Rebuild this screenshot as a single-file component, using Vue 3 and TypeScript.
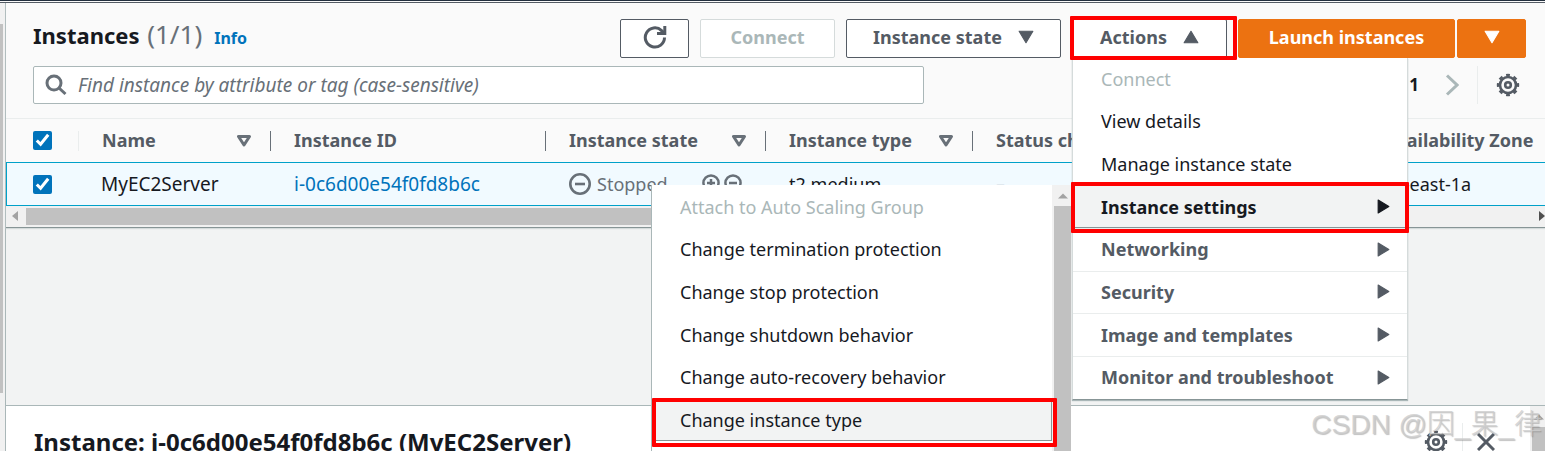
<script setup lang="ts">
import { ref } from 'vue'

interface Column {
  key: string
  label: string
  sortable: boolean
}

interface MenuItem {
  label: string
  disabled?: boolean
  submenu?: boolean
  active?: boolean
}

const columns: Column[] = [
  { key: 'name', label: 'Name', sortable: true },
  { key: 'id', label: 'Instance ID', sortable: false },
  { key: 'state', label: 'Instance state', sortable: true },
  { key: 'type', label: 'Instance type', sortable: true },
  { key: 'status', label: 'Status check', sortable: false },
  { key: 'zone', label: 'Availability Zone', sortable: false },
]

const actions: MenuItem[] = [
  { label: 'Connect', disabled: true },
  { label: 'View details' },
  { label: 'Manage instance state' },
  { label: 'Instance settings', submenu: true, active: true },
  { label: 'Networking', submenu: true },
  { label: 'Security', submenu: true },
  { label: 'Image and templates', submenu: true },
  { label: 'Monitor and troubleshoot', submenu: true },
]

const settings: MenuItem[] = [
  { label: 'Attach to Auto Scaling Group', disabled: true },
  { label: 'Change termination protection' },
  { label: 'Change stop protection' },
  { label: 'Change shutdown behavior' },
  { label: 'Change auto-recovery behavior' },
  { label: 'Change instance type', active: true },
]

const allSelected = ref(true)
const rowSelected = ref(true)
const query = ref('')
</script>

<template>
  <div class="console">
    <div class="topline"></div>
    <div class="body">
      <div class="rail"><div class="rail-thumb"></div></div>
      <main class="content">
        <section class="list">
          <header class="toolbar">
            <h1 class="title">Instances <span class="count">(1/1)</span></h1>
            <a class="info" href="#">Info</a>
            <div class="buttons">
              <button class="btn narrow" type="button" aria-label="Refresh">
                <svg class="icon" viewBox="0 0 24 24">
                  <path d="M21.500 12.500A9.600 9.600 0 1 1 18.600 5.600L21 8" />
                  <path d="M21.800 1v7.500H14" />
                </svg>
              </button>
              <button class="btn connect" type="button" disabled>Connect</button>
              <button class="btn state" type="button">
                Instance state
                <svg class="caret" viewBox="0 0 14 12"><path d="M1 1h12L7 11z" /></svg>
              </button>
              <div class="actions marked">
                <button class="btn action" type="button" aria-expanded="true">
                  Actions
                  <svg class="caret" viewBox="0 0 14 12"><path d="M1 11h12L7 1z" /></svg>
                </button>
                <ul class="menu">
                  <li
                    v-for="item in actions"
                    :key="item.label"
                    class="row"
                    :class="{ group: item.submenu, marked: item.active }"
                  >
                    <button
                      class="item"
                      :class="{ active: item.active }"
                      type="button"
                      :disabled="item.disabled"
                    >
                      {{ item.label }}
                      <svg v-if="item.submenu" class="arrow" viewBox="0 0 12 14">
                        <path d="M1 1v12L11 7z" />
                      </svg>
                    </button>
                    <div v-if="item.active" class="submenu">
                      <ul class="sublist">
                        <li
                          v-for="entry in settings"
                          :key="entry.label"
                          class="row"
                          :class="{ marked: entry.active }"
                        >
                          <button
                            class="item"
                            :class="{ active: entry.active }"
                            type="button"
                            :disabled="entry.disabled"
                          >
                            {{ entry.label }}
                          </button>
                        </li>
                      </ul>
                      <div class="vscroll">
                        <svg class="tri" viewBox="0 0 10 6"><path d="M0 5.500h10L5 .5z" /></svg>
                        <div class="vthumb"></div>
                      </div>
                    </div>
                  </li>
                </ul>
              </div>
              <div class="split">
                <button class="btn primary launch" type="button">Launch instances</button>
                <button class="btn primary narrow" type="button" aria-label="More launch options">
                  <svg class="caret" viewBox="0 0 14 12"><path d="M1 1h12L7 11z" /></svg>
                </button>
              </div>
            </div>
          </header>

          <div class="filters">
            <label class="search">
              <svg class="glass" viewBox="0 0 22 22">
                <circle cx="9" cy="9" r="7" />
                <path d="M14 14l6.500 6" />
              </svg>
              <input
                v-model="query"
                type="text"
                aria-label="Find instance"
                placeholder="Find instance by attribute or tag (case-sensitive)"
              />
            </label>
            <div class="pager">
              <span class="page">1</span>
              <button class="ghost" type="button" aria-label="Next page">
                <svg class="chevron" viewBox="0 0 14 22"><path d="M2 1.500L12 11 2 20.500" /></svg>
              </button>
              <span class="rule"></span>
              <button class="ghost" type="button" aria-label="Preferences">
                <svg class="gear" viewBox="0 0 24 24">
                  <circle cx="12" cy="12" r="8" />
                  <circle class="teeth" cx="12" cy="12" r="10" pathLength="16" />
                  <circle cx="12" cy="12" r="2.800" />
                </svg>
              </button>
            </div>
          </div>

          <div class="scroller">
            <table class="table">
              <colgroup>
                <col class="c-check" />
                <col v-for="c in columns" :key="c.key" :class="'c-' + c.key" />
              </colgroup>
              <thead>
                <tr>
                  <th class="check">
                    <input v-model="allSelected" type="checkbox" aria-label="Select all instances" />
                  </th>
                  <th v-for="c in columns" :key="c.key">
                    <div class="head">
                      <span class="label">{{ c.label }}</span>
                      <svg v-if="c.sortable" class="sort" viewBox="0 0 14 12">
                        <path d="M1.500 1.500h11L7 10z" />
                      </svg>
                    </div>
                  </th>
                </tr>
              </thead>
              <tbody>
                <tr class="selected">
                  <td class="check">
                    <input v-model="rowSelected" type="checkbox" aria-label="Select MyEC2Server" />
                  </td>
                  <td class="large">MyEC2Server</td>
                  <td class="large"><a href="#">i-0c6d00e54f0fd8b6c</a></td>
                  <td>
                    <div class="status">
                      <svg class="stop" viewBox="0 0 22 22">
                        <circle cx="11" cy="11" r="9.700" />
                        <path d="M6 11h10" />
                      </svg>
                      Stopped
                      <span class="zooms">
                        <svg class="lens" viewBox="0 0 20 20">
                          <circle cx="9" cy="9" r="7.600" />
                          <path d="M5 9h8M9 5v8M14.500 14.500L19 19" />
                        </svg>
                        <svg class="lens" viewBox="0 0 20 20">
                          <circle cx="9" cy="9" r="7.600" />
                          <path d="M5 9h8M14.500 14.500L19 19" />
                        </svg>
                      </span>
                    </div>
                  </td>
                  <td>t2.medium</td>
                  <td class="muted">–</td>
                  <td>us-east-1a</td>
                </tr>
              </tbody>
            </table>
          </div>
          <div class="hscroll">
            <svg class="side" viewBox="0 0 6 10"><path d="M6 0v10L0 5z" /></svg>
            <div class="hthumb"></div>
            <svg class="side dark" viewBox="0 0 6 10"><path d="M0 0v10l6-5z" /></svg>
          </div>
        </section>

        <section class="details">
          <h2 class="subtitle">Instance: i-0c6d00e54f0fd8b6c (MyEC2Server)</h2>
          <div class="tools">
            <button class="ghost" type="button" aria-label="Panel preferences">
              <svg class="gear" viewBox="0 0 24 24">
                <circle cx="12" cy="12" r="8" />
                <circle class="teeth" cx="12" cy="12" r="10" pathLength="16" />
                <circle cx="12" cy="12" r="2.800" />
              </svg>
            </button>
            <span class="rule"></span>
            <button class="ghost" type="button" aria-label="Close panel">
              <svg class="cross" viewBox="0 0 18 18"><path d="M1 1l16 16M17 1L1 17" /></svg>
            </button>
          </div>
          <div class="vscroll">
            <svg class="tri" viewBox="0 0 10 6"><path d="M0 5.500h10L5 .5z" /></svg>
            <div class="vthumb"></div>
          </div>
        </section>
      </main>
    </div>
    <div class="watermark">CSDN @因_果_律</div>
  </div>
</template>

<style>
body {
  margin: 0;
}
</style>

<style scoped>
* {
  box-sizing: border-box;
}

.console {
  position: relative;
  display: flex;
  flex-direction: column;
  height: 100vh;
  overflow: hidden;
  background: #f2f3f3;
  color: #16191f;
  font-family: 'Noto Sans', 'Open Sans', 'Noto Sans CJK SC', sans-serif;
  font-size: 18px;
  line-height: 24px;
}

.topline {
  flex: none;
  height: 3px;
  border-top: 1px solid #232f3e;
  border-bottom: 1px solid #545b64;
  background: #fafafa;
}

.body {
  display: flex;
  flex: 1;
  min-height: 0;
}

.rail {
  flex: none;
  width: 5px;
  padding-top: 21px;
  background: #f1f1f1;
}

.rail-thumb {
  width: 3px;
  height: 369px;
  background: #c1c1c1;
}

.content {
  display: flex;
  flex: 1;
  flex-direction: column;
  gap: 177px;
  min-width: 0;
  border-left: 1px solid #aab7b8;
}

.list {
  flex: none;
  border-bottom: 1px solid #879596;
  background: #fafafa;
  box-shadow: 0 1px 1px #d5dbdb;
}

.toolbar {
  display: flex;
  align-items: center;
  padding: 15px 19px 0 27px;
}

.title {
  margin: 0 0 7px;
  font-size: 22px;
  font-weight: 700;
  line-height: 32px;
}

.count {
  margin-left: 2px;
  color: #687078;
  font-size: 26px;
  font-weight: 400;
}

.info {
  margin: 0 0 0 12px;
  color: #0073bb;
  font-size: 16px;
  font-weight: 700;
  text-decoration: none;
}

.buttons {
  display: flex;
  gap: 11px;
  margin-left: auto;
}

.btn {
  display: flex;
  align-items: center;
  justify-content: center;
  gap: 16px;
  height: 39px;
  padding: 0 0 2px;
  border: 1px solid #545b64;
  border-radius: 2px;
  background: #fff;
  color: #545b64;
  font: inherit;
  font-weight: 700;
  white-space: nowrap;
}

.btn:disabled {
  border-color: #d5dbdb;
  color: #aab7b8;
}

.narrow {
  width: 69px;
}

.connect {
  width: 135px;
}

.state {
  width: 215px;
}

.launch {
  width: 217px;
}

.action {
  width: 155px;
}

.primary {
  border-color: #ec7211;
  background: #ec7211;
  color: #fff;
}

.split {
  display: flex;
  gap: 2px;
}

svg {
  display: block;
  flex: none;
  fill: none;
  stroke: currentColor;
}

.icon {
  width: 24px;
  height: 24px;
  stroke-width: 3;
}

.caret,
.arrow {
  fill: currentColor;
  stroke-width: 1;
  stroke-linejoin: round;
}

.caret {
  width: 16px;
  height: 14px;
}

.arrow {
  width: 13px;
  height: 15px;
}

.actions {
  position: relative;
  z-index: 5;
}

.marked {
  position: relative;
}

.marked::after {
  position: absolute;
  z-index: 6;
  border: 4px solid #f00;
  border-radius: 1px;
  content: '';
  pointer-events: none;
}

.actions.marked::after {
  inset: -3px -10px -2px -2px;
}

.menu .row.marked::after {
  inset: -3px -2px -5px -2px;
}

.sublist .row.marked::after {
  inset: -1px -5px -6px 0;
}

.menu,
.sublist {
  display: flex;
  flex-direction: column;
  margin: 0;
  padding: 0;
  list-style: none;
}

.menu {
  position: absolute;
  top: 100%;
  left: 0;
  width: 336px;
  height: 342px;
  border: 1px solid #d5dbdb;
  border-top: 0;
  border-bottom-color: #879596;
  background: #fff;
  box-shadow: 0 1px 1px #aab7b8;
}

.row {
  display: flex;
  flex: 1;
}

.item {
  display: flex;
  flex: 1;
  align-items: center;
  justify-content: space-between;
  padding: 0 17px 0 28px;
  border: 0;
  background: #fff;
  color: #16191f;
  font: inherit;
  text-align: left;
  white-space: nowrap;
}

.item:disabled {
  color: #aab7b8;
}

.group > .item {
  color: #545b64;
  font-weight: 700;
}

.group + .group > .item {
  box-shadow: inset 0 1px #eaeded;
}

.row > .item.active {
  background: #f2f3f3;
  box-shadow: inset 0 -1px #879596;
  color: #16191f;
}

.submenu {
  position: absolute;
  top: 0;
  right: 100%;
  display: flex;
  width: 420px;
  height: 300px;
  margin-right: 2px;
  border-left: 1px solid #aab7b8;
  background: #fff;
}

.sublist {
  flex: 1;
  height: 256px;
}

.sublist .row > .item.active {
  box-shadow: inset -1px -1px #879596;
}

.vscroll {
  display: flex;
  flex: none;
  flex-direction: column;
  align-items: center;
  gap: 7px;
  width: 19px;
  padding: 8px 0 0 2px;
  background: #f1f1f1;
}

.tri {
  width: 10px;
  height: 6px;
  fill: #a3a3a3;
  stroke: none;
}

.vthumb {
  flex: 1;
  width: 100%;
  background: #c1c1c1;
}

.filters {
  display: flex;
  align-items: center;
  justify-content: space-between;
  padding: 8px 25px 14px 27px;
}

.search {
  display: flex;
  flex: 0 1 891px;
  align-items: center;
  gap: 11px;
  height: 38px;
  padding: 0 11px;
  border: 1px solid #aab7b8;
  border-radius: 2px;
  background: #fff;
}

.glass {
  width: 22px;
  height: 22px;
  color: #687078;
  stroke-width: 3;
}

.search input {
  flex: 1;
  min-width: 0;
  padding: 0;
  border: 0;
  outline: 0;
  background: transparent;
  color: #16191f;
  font: inherit;
  font-size: 19px;
}

.search input::placeholder {
  color: #687078;
  font-style: italic;
  opacity: 1;
}

.pager,
.tools {
  display: flex;
  align-items: center;
  gap: 18px;
}

.page {
  margin-right: 8px;
  font-size: 17px;
  font-weight: 700;
}

.ghost {
  padding: 0;
  border: 0;
  background: none;
  color: #545b64;
}

.chevron {
  width: 14px;
  height: 22px;
  color: #aab7b8;
  stroke-width: 3;
}

.rule {
  width: 1px;
  height: 38px;
  background: #eaeded;
}

.gear {
  width: 24px;
  height: 24px;
  stroke-width: 2.6;
}

.teeth {
  stroke-width: 2.4;
  stroke-dasharray: 1 1;
  stroke-dashoffset: 0.5;
}

.cross {
  width: 18px;
  height: 18px;
  stroke-width: 3;
}

.scroller {
  overflow: hidden;
}

.table {
  width: 100%;
  min-width: 1539px;
  border-collapse: separate;
  border-spacing: 0;
  table-layout: fixed;
}

.c-check {
  width: 73px;
}

.c-name {
  width: 192px;
}

.c-id {
  width: 275px;
}

.c-state {
  width: 220px;
}

.c-type {
  width: 207px;
}

.c-status {
  width: 388px;
}

th,
td {
  height: 44px;
  padding: 0 0 0 23px;
  text-align: left;
  white-space: nowrap;
}

th {
  border-top: 1px solid #eaeded;
  color: #545b64;
  font-weight: 700;
}

td {
  border-top: 1px solid #00a1c9;
  border-bottom: 1px solid #00a1c9;
  background: #f1faff;
}

td:first-child {
  border-left: 1px solid #00a1c9;
}

td a {
  color: #0073bb;
  text-decoration: none;
}

.large {
  padding-left: 22px;
  font-size: 19px;
}

.large + .large {
  padding-left: 23px;
}

.check {
  padding-left: 27px;
}

td.check {
  padding-left: 26px;
}

.check input {
  display: block;
  width: 19px;
  height: 19px;
  margin: 0;
  accent-color: #0073bb;
}

th.check {
  background: linear-gradient(#eaeded, #eaeded) right center / 1px 20px no-repeat;
}

.head {
  display: flex;
  align-items: center;
  justify-content: space-between;
  height: 20px;
  padding-right: 19px;
  border-right: 1px solid #687078;
}

.label {
  padding-bottom: 2px;
}

th:last-child .head {
  padding-right: 0;
  border-right: 0;
}

.sort {
  width: 14px;
  height: 12px;
  color: #687078;
  stroke-width: 3;
  stroke-linejoin: round;
}

.status {
  display: flex;
  align-items: center;
  gap: 6px;
  color: #687078;
}

.stop {
  width: 22px;
  height: 22px;
  stroke-width: 2.6;
}

.zooms {
  display: flex;
  gap: 2px;
  margin-left: auto;
  padding-right: 22px;
}

.lens {
  width: 20px;
  height: 20px;
  stroke-width: 2.5;
}

.muted {
  color: #687078;
}

.hscroll {
  display: flex;
  align-items: center;
  gap: 8px;
  height: 21px;
  padding: 0 0 1px 6px;
  background: #f1f1f1;
}

.hthumb {
  flex: 0 1 1200px;
  height: 17px;
  background: #c1c1c1;
}

.side {
  width: 6px;
  height: 10px;
  fill: #a3a3a3;
  stroke: none;
}

.dark {
  margin-left: auto;
  fill: #505050;
}

.details {
  display: flex;
  flex: none;
  align-items: flex-start;
  height: 72px;
  border-top: 1px solid #aab7b8;
  background: #fff;
}

.subtitle {
  flex: 1;
  margin: 20px 0 0 28px;
  font-size: 24px;
  font-weight: 700;
  line-height: 32px;
}

.tools {
  gap: 14px;
  margin: 17px 35px 0 0;
}

.details .vscroll {
  align-self: stretch;
  width: 15px;
}

.watermark {
  position: absolute;
  z-index: 9;
  right: 3px;
  bottom: 8px;
  color: rgba(205, 205, 205, 0.8);
  font-family: 'Liberation Sans', 'Noto Sans CJK SC', sans-serif;
  font-size: 28px;
  font-weight: 300;
  line-height: 36px;
  text-shadow: 1px 1px 1px rgba(100, 100, 100, 0.4);
  white-space: nowrap;
}
</style>
